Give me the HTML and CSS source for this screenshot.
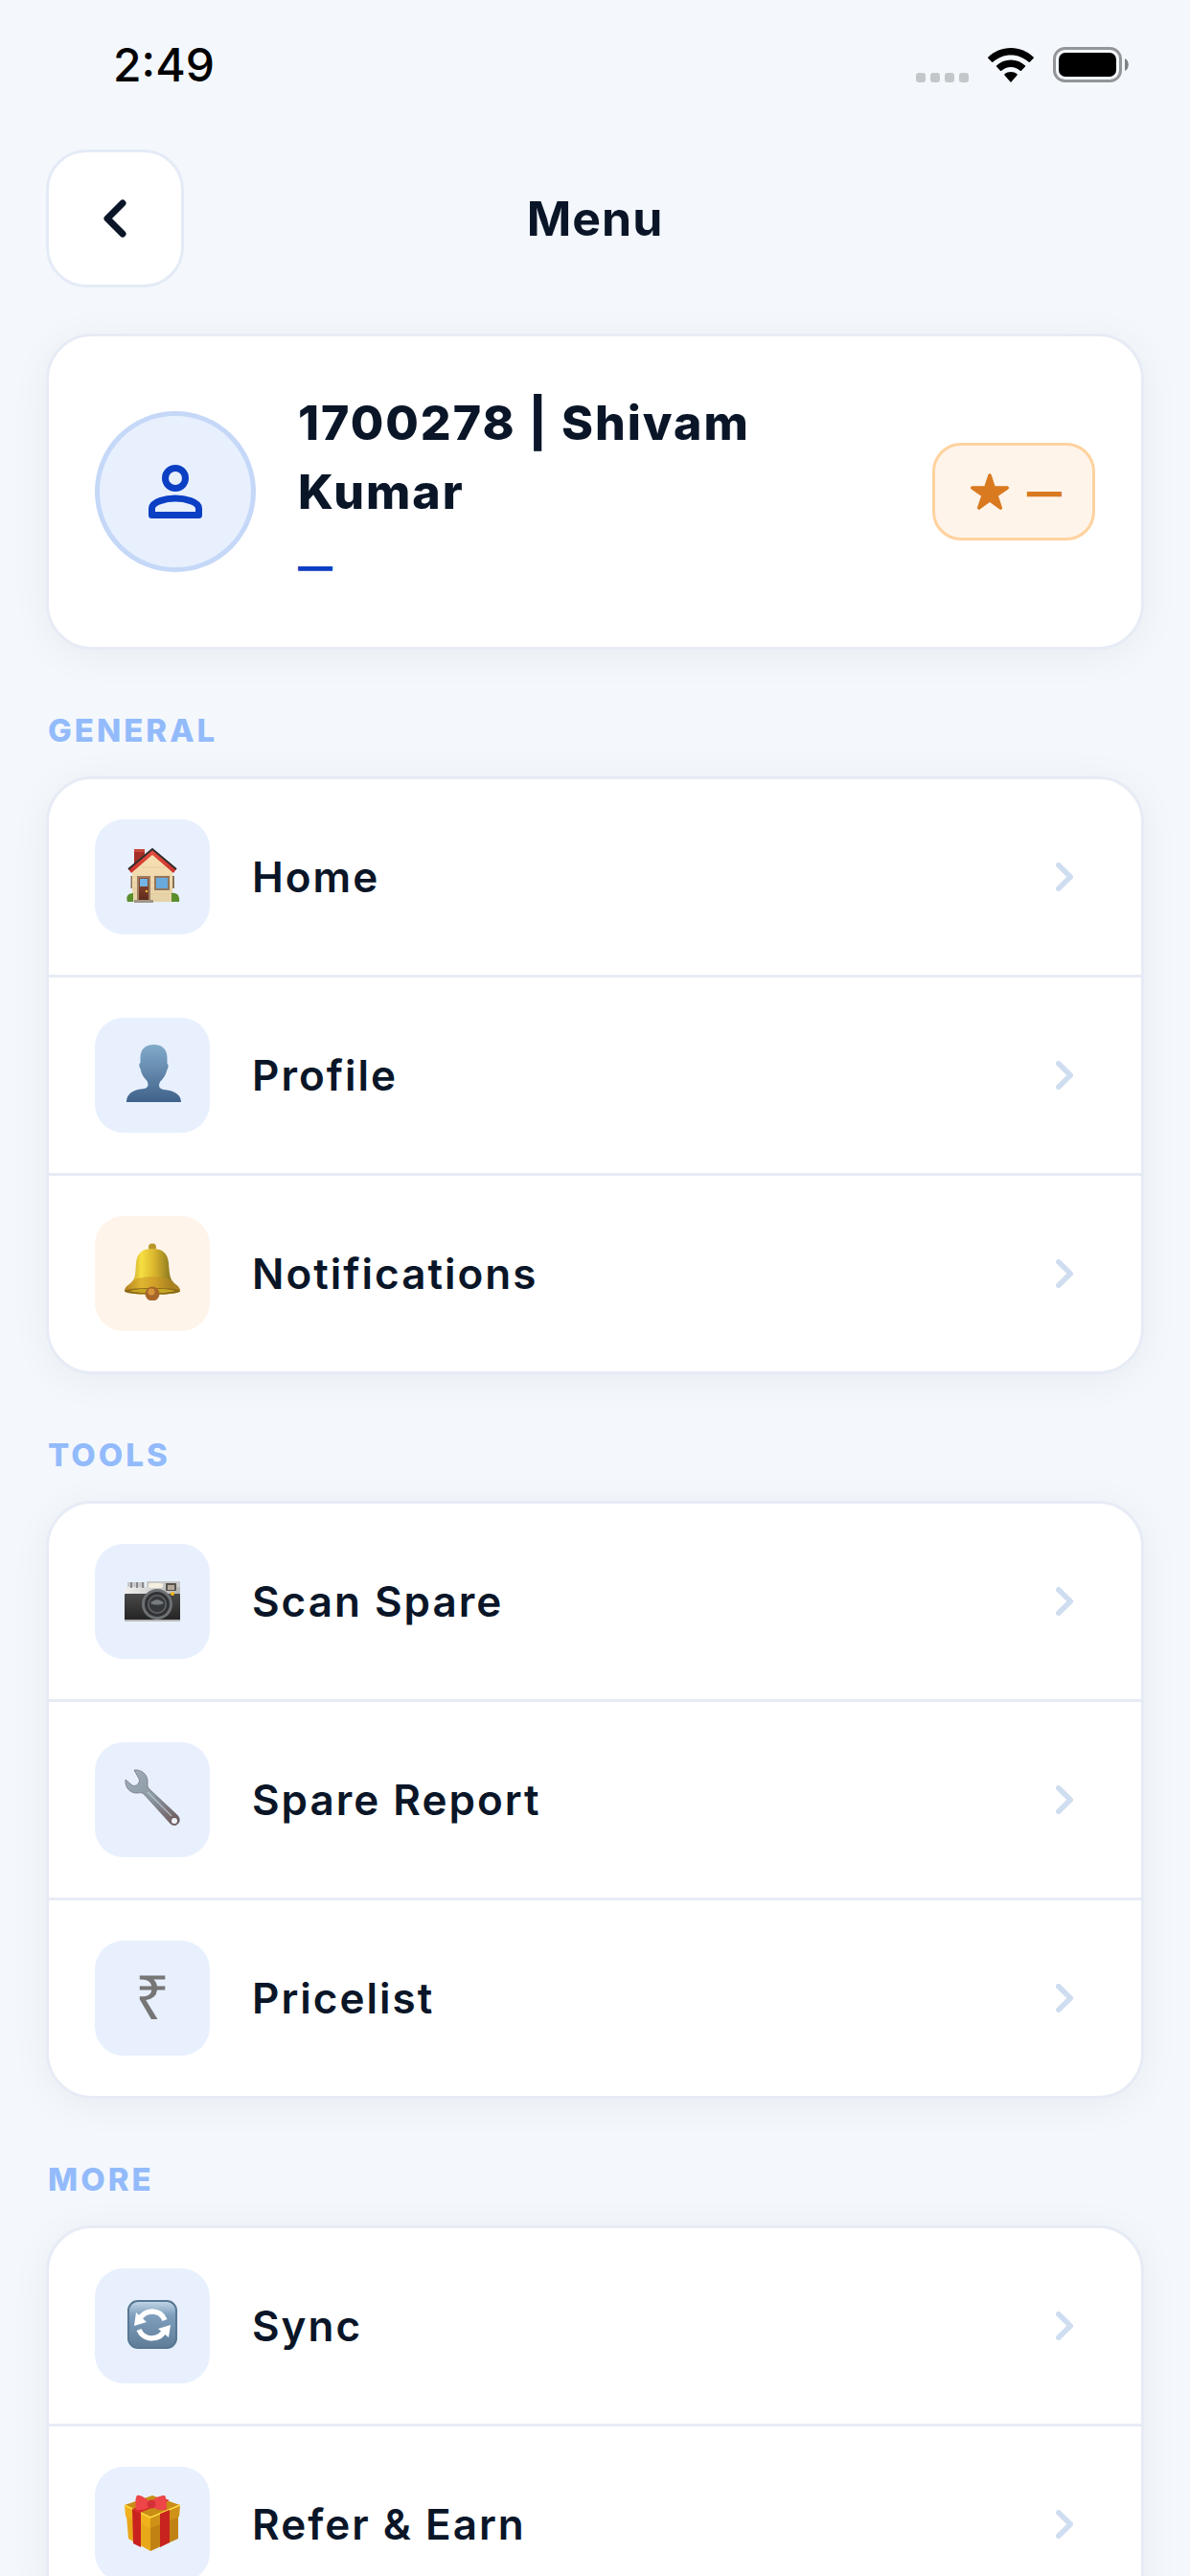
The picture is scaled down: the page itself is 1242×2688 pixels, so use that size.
FILE: index.html
```html
<!DOCTYPE html>
<html lang="en">
<head>
<meta charset="utf-8">
<meta name="viewport" content="width=device-width, initial-scale=1">
<title>Menu</title>
<link rel="stylesheet" href="styles.css">
</head>
<body>
<svg class="defs" aria-hidden="true">
  <defs>
    <symbol id="chevron" viewBox="0 0 18 30"><path d="M2.800 2.800L15.200 15L2.800 27.200" fill="none" stroke="currentColor" stroke-width="5.500" stroke-linecap="round" stroke-linejoin="round"/></symbol>
    <linearGradient id="wall" x1="0" y1="0" x2="0" y2="1"><stop offset="0" stop-color="#f8e0b2"/><stop offset="1" stop-color="#e6d2a8"/></linearGradient>
    <linearGradient id="roof" x1="0" y1="0" x2="0" y2="1"><stop offset="0" stop-color="#e8523f"/><stop offset="1" stop-color="#c9302b"/></linearGradient>
    <linearGradient id="door" x1="0" y1="0" x2="0" y2="1"><stop offset="0" stop-color="#8f4a30"/><stop offset="1" stop-color="#5d2a1c"/></linearGradient>
    <linearGradient id="bust" x1="0" y1="0" x2="0" y2="1"><stop offset="0" stop-color="#82abca"/><stop offset="1" stop-color="#40618a"/></linearGradient>
    <linearGradient id="brass" x1="0" y1="0" x2="1" y2="0"><stop offset="0" stop-color="#a87a1c"/><stop offset=".3" stop-color="#f6e041"/><stop offset=".55" stop-color="#d8b22c"/><stop offset=".85" stop-color="#85751f"/><stop offset="1" stop-color="#a8801f"/></linearGradient>
    <linearGradient id="silver" x1="0" y1="0" x2="1" y2="0"><stop offset="0" stop-color="#f0f0ee"/><stop offset="1" stop-color="#b4b4b2"/></linearGradient>
    <linearGradient id="leather" x1="0" y1="0" x2="0" y2="1"><stop offset="0" stop-color="#4a4a4a"/><stop offset="1" stop-color="#232323"/></linearGradient>
    <linearGradient id="steel" x1="0" y1="0" x2="1" y2="1"><stop offset="0" stop-color="#a3b1bd"/><stop offset=".5" stop-color="#8a97a1"/><stop offset="1" stop-color="#6b5152"/></linearGradient>
    <linearGradient id="key" x1="0" y1="0" x2="0" y2="1"><stop offset="0" stop-color="#c4d8e8"/><stop offset=".3" stop-color="#7f9fbe"/><stop offset="1" stop-color="#5f7c97"/></linearGradient>
  </defs>
</svg>

<div class="screen">
  <div class="status">
    <time class="clock">2:49</time>
    <div class="indicators">
      <svg class="dots" viewBox="0 0 55 10" aria-hidden="true"><g fill="#c3c7ca"><rect width="10" height="10" rx="3"/><rect x="15" width="10" height="10" rx="3"/><rect x="30" width="10" height="10" rx="3"/><rect x="45" width="10" height="10" rx="3"/></g></svg>
      <svg class="wifi" viewBox="0 0 48 36" aria-hidden="true"><path d="M24 0C14.900 0 6.500 3.600 0.400 9.600C-.1 10 0 10.400 .3 10.800L4.200 14.700C4.700 15.100 5.100 15.100 5.600 14.600C10.500 10.200 16.900 7.500 24 7.500S37.500 10.200 42.400 14.600C42.900 15.100 43.300 15.100 43.800 14.700L47.700 10.800C48 10.400 48.100 10 47.600 9.600C41.500 3.600 33.100 0 24 0ZM24 12.500C18.300 12.500 13 14.700 9 18.400C8.600 18.800 8.600 19.200 9 19.600L13 23.700C13.400 24.100 13.800 24.100 14.300 23.700C16.900 21.400 20.300 20 24 20S31.100 21.400 33.700 23.700C34.200 24.100 34.600 24.100 35 23.700L39 19.600C39.400 19.200 39.400 18.800 39 18.400C35 14.700 29.700 12.500 24 12.500ZM24 25C21.500 25 19.300 25.900 17.500 27.300C17.100 27.700 17.100 28.100 17.500 28.600L23.300 35.300C23.700 35.900 24.300 35.900 24.700 35.300L30.500 28.600C30.900 28.100 30.900 27.700 30.500 27.300C28.700 25.900 26.500 25 24 25Z"/></svg>
      <svg class="battery" viewBox="0 0 79 37" aria-hidden="true"><rect x="1.500" y="1.500" width="69" height="34" rx="11" fill="none" stroke="#939598" stroke-width="3"/><rect x="6" y="6" width="60" height="25" rx="7"/><path d="M75 12c5 1.500 5 11.500 0 13z" fill="#7f8284"/></svg>
    </div>
  </div>

  <header class="topbar">
    <button class="back" type="button" aria-label="Back"><svg viewBox="0 0 24 40" aria-hidden="true"><path d="M20 4L4 20l16 16" fill="none" stroke="currentColor" stroke-width="7" stroke-linecap="round" stroke-linejoin="round"/></svg></button>
    <h1>Menu</h1>
  </header>

  <main>
    <section class="card profile">
      <div class="avatar"><svg viewBox="0 0 24 24" aria-hidden="true"><g fill="none" stroke="currentColor" stroke-width="2" stroke-linejoin="round"><circle cx="12" cy="8" r="3"/><path d="M5 19h14v-2c0-2-4.200-3-7-3s-7 1-7 3z"/></g></svg></div>
      <div class="who">
        <h2>1700278 | Shivam Kumar</h2>
        <p>—</p>
      </div>
      <div class="points"><svg viewBox="0 0 512 512" aria-hidden="true"><path fill="currentColor" stroke="currentColor" stroke-width="12" stroke-linejoin="round" d="M394 480a16 16 0 01-9.390-3L256 383.760 127.390 477a16 16 0 01-24.550-18.080L153 310.350 23 221.200a16 16 0 019-29.200h160.380l48.400-148.950a16 16 0 0130.440 0l48.400 149H480a16 16 0 019.050 29.200L359 310.350l50.130 148.530A16 16 0 01394 480z"/></svg><span>—</span></div>
    </section>

    <h3 class="label">GENERAL</h3>
    <nav class="card" aria-label="General">
      <a class="row" href="#home">
        <span class="tile"><svg viewBox="0 0 60 60" aria-hidden="true"><path d="M11 4h11v10l-11 9z" fill="#a52f27"/><path d="M11 3h11v3H11z" fill="#c8483c"/><path d="M9 25L30 8l21 17v33H9z" fill="url(#wall)"/><path d="M10 32h40M10 38h40M10 44h40M10 50h40M18 22h25" stroke="#dfc594" stroke-width=".6"/><path d="M5 24L30 3l25 21-3 4L30 9 8 28z" fill="url(#roof)"/><path d="M5 24L30 3l25 21" fill="none" stroke="#302c2c" stroke-width="2"/><path d="M14 31h14v26H14z" fill="#a07f63"/><path d="M16 33h10v24H16z" fill="url(#door)"/><path d="M17 34h8v8h-8z" fill="#72b5e4"/><circle cx="24" cy="47" r="1.300" fill="#e8b83c"/><path d="M32 31h16v15H32z" fill="#92755a"/><path d="M34 33h12v11H34z" fill="#69a9dc"/><path d="M7.500 31h1.500v13H7.500zM51 31h2v13h-2z" fill="#8a7358"/><path d="M4 58c-2-6 1-9 6-9v9zM50 58v-9c6-1 9 3 8 9z" fill="#5b8e2d"/><path d="M11 56h20v3H11z" fill="#a09488"/></svg></span>
        <span class="name">Home</span><svg class="chev"><use href="#chevron"/></svg>
      </a>
      <a class="row" href="#profile">
        <span class="tile"><svg viewBox="0 0 60 60" aria-hidden="true"><path d="M31.500 0c-9 0-14 5-14 14v5c-2 1-1 5 0 6 1 6 4 10 7 13 2 4 1 7-3 8C10 47 3 51 3 60h57c0-8-7-12-18-13-5-1-6-4-4-8 3-3 6-7 7.500-13 1-1 2-5 0-6v-6c0-9-5-14-14-14z" fill="url(#bust)"/></svg></span>
        <span class="name">Profile</span><svg class="chev"><use href="#chevron"/></svg>
      </a>
      <a class="row" href="#notifications">
        <span class="tile warm"><svg viewBox="0 0 60 60" aria-hidden="true"><circle cx="30" cy="4.500" r="4" fill="#b8962a"/><path d="M30 6c-10 0-16 4-17 15-1 12 0 17-7 22-3 2-5 4-5 7 0 2 12 4 29 4s29-2 29-4c0-3-2-5-5-7-6-5-6-10-7-22C46 10 40 6 30 6z" fill="url(#brass)"/><path d="M10 39c10-5 30-5 40 0l8 10H2z" fill="#c78c22" opacity=".5"/><path d="M1 50c0-4 58-4 58 0 0 5-58 5-58 0z" fill="#8d6a17"/><path d="M6 50c10-3 38-3 48 0-10 3-38 3-48 0z" fill="#c8a824"/><circle cx="30" cy="53" r="7.500" fill="#a8672a"/><circle cx="29" cy="51" r="3.500" fill="#d8943c"/></svg></span>
        <span class="name">Notifications</span><svg class="chev"><use href="#chevron"/></svg>
      </a>
    </nav>

    <h3 class="label">TOOLS</h3>
    <nav class="card" aria-label="Tools">
      <a class="row" href="#scan">
        <span class="tile"><svg viewBox="0 0 60 60" aria-hidden="true"><g transform="translate(0 2)"><path d="M4 10h18v6H4zM24 9h35v8H24z" fill="#c9c9c9"/><path d="M1 15h58v9H1z" fill="url(#silver)"/><path d="M8 10v6M14 10v6M20 10v6" stroke="#85888c" stroke-width="2"/><rect x="1" y="22" width="58" height="28" rx="1" fill="url(#leather)"/><path d="M1 49h58v2H1z" fill="#b7b7b7"/><rect x="26" y="11" width="15" height="5" rx="2" fill="#f4efdf"/><path d="M44 11h11v8H44z" fill="#57534f"/><path d="M46 13h7v5h-7z" fill="#b5a79a"/><circle cx="51" cy="22" r="2" fill="#f2b91e"/><circle cx="35" cy="33" r="16" fill="#6e7174"/><circle cx="35" cy="33" r="13" fill="#303234"/><circle cx="35" cy="33" r="10" fill="#64676a"/><circle cx="35" cy="33" r="8.500" fill="#36393c"/><path d="M28 32c4-5 10-5 14 0-4 2-10 2-14 0z" fill="#777b7e"/></g></svg></span>
        <span class="name">Scan Spare</span><svg class="chev"><use href="#chevron"/></svg>
      </a>
      <a class="row" href="#report">
        <span class="tile"><svg viewBox="0 0 60 60" aria-hidden="true"><path d="M11 1c8-1 15 5 14 14-.3 2 0 4 2 6l29 27c6 6-1 14-7 9L22 27c-2-2-4-3-7-2C7 26 1 19 2 11l7 6c4 2 9-3 7-7z" fill="url(#steel)" stroke="#6a6a70" stroke-width=".7"/><path d="M25 24l25 25" stroke="#c5d2dc" stroke-width="1.500" opacity=".7"/><circle cx="53" cy="54" r="3" fill="#eef3fb"/></svg></span>
        <span class="name">Spare Report</span><svg class="chev"><use href="#chevron"/></svg>
      </a>
      <a class="row" href="#pricelist">
        <span class="tile rupee">₹</span>
        <span class="name">Pricelist</span><svg class="chev"><use href="#chevron"/></svg>
      </a>
    </nav>

    <h3 class="label">MORE</h3>
    <nav class="card" aria-label="More">
      <a class="row" href="#sync">
        <span class="tile"><svg viewBox="0 0 60 60" aria-hidden="true"><rect x="5" y="6" width="50" height="49" rx="10" fill="url(#key)" stroke="#587792" stroke-width="2"/><g fill="none" stroke="#fff" stroke-width="5.500"><path d="M16 26c6-12 22-12 27 0M44 35c-6 13-23 13-28 1"/></g><path d="M13 18l11 10-13 4zM47 44l-11-9 13-4z" fill="#fff"/></svg></span>
        <span class="name">Sync</span><svg class="chev"><use href="#chevron"/></svg>
      </a>
      <a class="row" href="#refer">
        <span class="tile"><svg viewBox="0 0 60 60" aria-hidden="true"><path d="M3 23l25 10v27L5 47z" fill="#e9a81a"/><path d="M28 33l29-11v25L28 60z" fill="#c08213"/><path d="M1 12l29-10 29 10-31 13z" fill="#c98d15"/><path d="M1 12l27 13v11L2 24z" fill="#f0b21d"/><path d="M28 25l31-13-1 12-30 12z" fill="#cf9117"/><path d="M1 12l27 13 31-13" fill="none" stroke="#ffdb3f" stroke-width="1.500"/><path d="M9 16l9 4v36l-8-4zM38 21l10-4v34l-10 5z" fill="#c9231f"/><path d="M9 16l33-11 6 2-31 13z" fill="#d8282a"/><path d="M28 10c-5-6-11-9-14-8-2 3-2 9-1 15 6 1 12-1 15-4 4 3 10 5 17 4 0-6 0-12-2-15-5 0-11 2-15 8z" fill="#ed4548"/><circle cx="29" cy="11" r="4.500" fill="#d53037"/></svg></span>
        <span class="name">Refer &amp; Earn</span><svg class="chev"><use href="#chevron"/></svg>
      </a>
    </nav>
  </main>
</div>
</body>
</html>
```
FILE: styles.css
```css
* { box-sizing: border-box; }

html { background: #f4f8fd; }

body {
  margin: 0;
  height: 100vh;
  overflow: hidden;
  background: #f4f8fd;
  color: #0a1628;
  font-family: Inter, "Liberation Sans", sans-serif;
}

h1, h2, h3, p { margin: 0; }

.defs { position: absolute; width: 0; height: 0; }

.screen { padding: 0 48px; }

.status {
  display: flex;
  align-items: center;
  justify-content: space-between;
  height: 132px;
  padding: 3px 16px 0 70px;
  color: #000;
}

.clock { font-size: 48px; font-weight: 500; line-height: 60px; }

.indicators { display: flex; align-items: flex-end; gap: 20px; }
.dots { width: 55px; height: 10px; }
.wifi { width: 48px; height: 36px; }
.battery { width: 79px; height: 37px; }

.topbar {
  display: grid;
  grid-template-columns: 144px 1fr 144px;
  align-items: center;
  margin: 24px 0 48px;
}

.back {
  display: grid;
  place-items: center;
  width: 144px;
  height: 144px;
  padding: 0;
  border: 3px solid #e4ebf6;
  border-radius: 42px;
  background: #fff;
  color: #0a1628;
}
.back svg { width: 24px; height: 40px; }

h1, h2 {
  font-size: 50px;
  font-weight: 700;
  line-height: 72px;
  letter-spacing: 1px;
}
h1 { text-align: center; }
h2 { font-weight: 800; letter-spacing: 2px; }

.card {
  display: block;
  overflow: hidden;
  border: 3px solid #e7ebf5;
  border-radius: 48px;
  background: #fff;
  box-shadow: 0 6px 42px rgba(0, 0, 0, .05);
}

.profile {
  display: flex;
  align-items: center;
  gap: 44px;
  padding: 54px 48px;
}

.avatar {
  display: grid;
  flex: none;
  place-items: center;
  width: 168px;
  height: 168px;
  border: 5px solid #c5d8f8;
  border-radius: 50%;
  background: #e8f0fe;
  color: #0b3fc4;
}
.avatar svg { width: 84px; height: 84px; }

.who { flex: 1; }
.who p {
  margin-top: 12px;
  color: #0b3fc4;
  font-size: 36px;
  font-weight: 800;
  line-height: 60px;
}

.points {
  display: flex;
  flex: none;
  align-items: center;
  gap: 18px;
  height: 102px;
  padding: 0 32px 0 36px;
  border: 3px solid #ffd29f;
  border-radius: 30px;
  background: #fff4ea;
  color: #d97a20;
  font-size: 36px;
  font-weight: 900;
}
.points svg { width: 42px; height: 42px; }

.label {
  margin: 64px 0 28px;
  padding-left: 2px;
  color: #93bbfb;
  font-size: 33px;
  font-weight: 800;
  line-height: 40px;
  letter-spacing: 3px;
}

.row {
  display: flex;
  align-items: center;
  gap: 44px;
  padding: 42px 71px 42px 48px;
  color: inherit;
  text-decoration: none;
}
.row + .row { border-top: 3px solid #e7ebf5; }

.tile {
  display: grid;
  flex: none;
  place-items: center;
  width: 120px;
  height: 120px;
  padding-bottom: 4px;
  border-radius: 30px;
  background: #e8f0fe;
}
.tile svg { width: 60px; height: 60px; }
.warm { background: #fff4ea; }
.rupee { color: #767676; font-family: "Noto Sans", Inter, sans-serif; font-size: 64px; line-height: 72px; }

.name {
  flex: 1;
  font-size: 44px;
  font-weight: 600;
  line-height: 60px;
  letter-spacing: 2px;
}

.chev { width: 18px; height: 30px; color: #cfddf0; }
```
